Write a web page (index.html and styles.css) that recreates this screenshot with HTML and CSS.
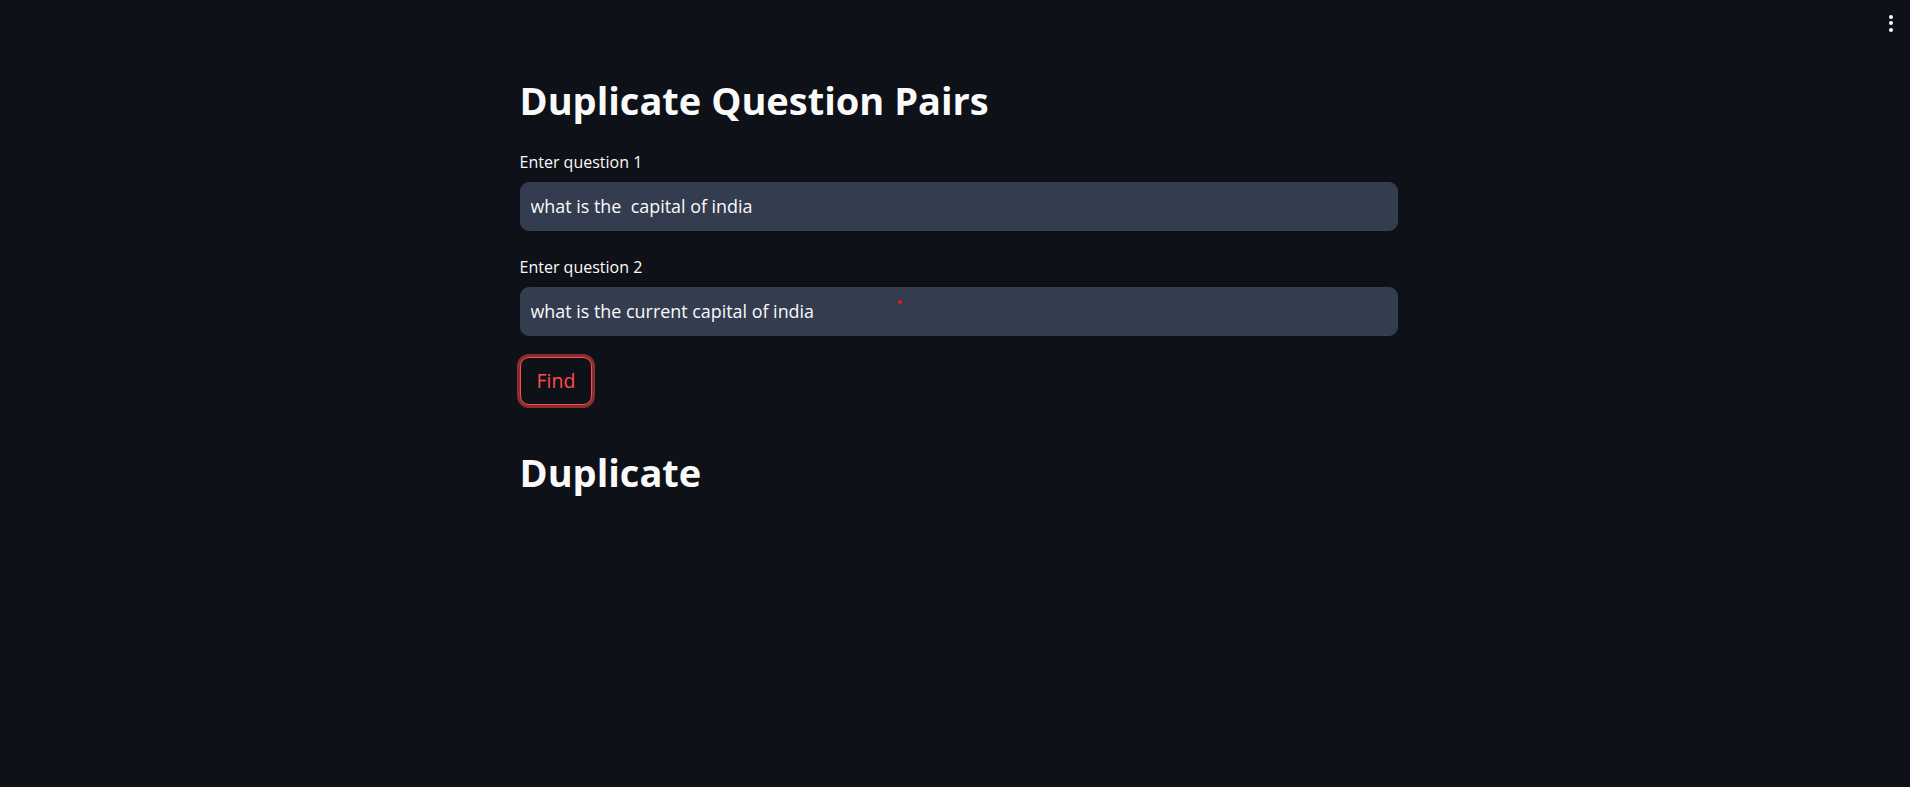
FILE: index.html
```html
<!DOCTYPE html>
<html lang="en">
<head>
<meta charset="utf-8">
<title>Duplicate Question Pairs</title>
<link rel="stylesheet" href="styles.css">
</head>
<body>
<div class="menu" aria-label="Main menu"><span class="dot"></span><span class="dot"></span><span class="dot"></span></div>
<main class="main">
  <h1 class="title">Duplicate Question Pairs</h1>
  <div class="field">
    <label class="label" for="q1">Enter question 1</label>
    <div class="input-wrap"><input class="input" id="q1" type="text" value="what is the  capital of india" readonly></div>
  </div>
  <div class="field field-second">
    <label class="label" for="q2">Enter question 2</label>
    <div class="input-wrap"><input class="input" id="q2" type="text" value="what is the current capital of india" readonly><span class="cursor-dot"></span></div>
  </div>
  <button class="btn" type="button">Find</button>
  <h1 class="title result">Duplicate</h1>
</main>
</body>
</html>
```
FILE: styles.css
```css
html, body { margin: 0; padding: 0; }
body {
  background: #0e1117;
  color: #fafafa;
  font-family: "Open Sans", "Noto Sans", sans-serif;
  min-height: 787px;
}
.menu {
  position: absolute;
  top: 15px;
  left: 1889px;
  display: flex;
  flex-direction: column;
  gap: 2.3px;
}
.dot { width: 4px; height: 4px; border-radius: 50%; background: #fafafa; }
.main {
  width: 878px;
  margin-left: calc(50% - 435.5px);
  padding-top: 76px;
}
.title {
  margin: 0;
  font-size: 38px;
  line-height: 48px;
  font-weight: 700;
  color: #fafafa;
}
.field { margin-top: 27.6px; display: flex; flex-direction: column; gap: 9.4px; }
.field-second { margin-top: 25.6px; }
.label { font-size: 16px; line-height: 21px; color: #fafafa; }
.input-wrap { position: relative; }
.input {
  box-sizing: border-box;
  display: block;
  width: 100%;
  height: 49px;
  background: #343c4f;
  border: 1px solid #363e51;
  border-radius: 9px;
  color: #fafafa;
  font-family: inherit;
  font-size: 17.9px;
  padding: 0 10px;
  outline: none;
}
.cursor-dot {
  position: absolute;
  left: 378px;
  top: 13px;
  width: 4px; height: 4px; border-radius: 50%;
  background: #e31b1b;
}
.btn {
  display: block;
  margin-top: 21px;
  height: 48px;
  padding: 0 16px;
  background: #0e1117;
  border: 1px solid #ff4b4b;
  border-radius: 9px;
  box-shadow: 0 0 0 3px rgba(255, 75, 75, 0.5);
  color: #ff4b4b;
  font-family: inherit;
  font-size: 19.5px;
}
.result { margin-top: 43px; }
```
